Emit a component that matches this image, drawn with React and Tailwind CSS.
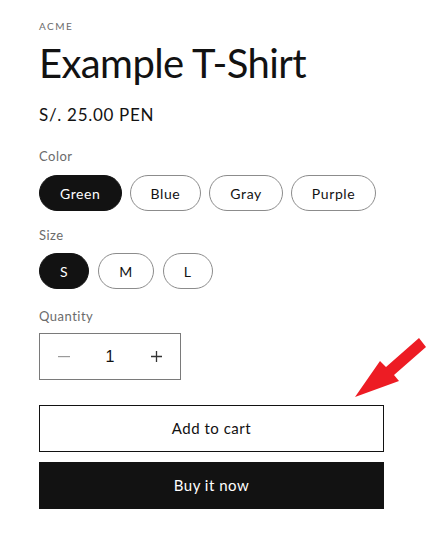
import { useState } from 'react';

const COLORS = ['Green', 'Blue', 'Gray', 'Purple'];
const SIZES = ['S', 'M', 'L'];

const Pill = ({ label, active, onClick }) => (
    <button
        onClick={onClick}
        className={`h-[36px] rounded-full px-[20px] text-[14px] tracking-[0.6px] border ${
            active
                ? 'bg-[#121212] border-[#121212] text-white'
                : 'bg-white border-[#8c8c8c] text-[#121212]'
        }`}
    >
        {label}
    </button>
);

const App = () => {
    const [color, setColor] = useState('Green');
    const [size, setSize] = useState('S');
    const [qty, setQty] = useState(1);

    return (
        <div className="relative w-[426px] h-[542px] overflow-hidden bg-white text-[#121212]" style={{ fontFamily: 'Lato, "Open Sans", sans-serif' }}>
            <div className="pl-[39px] pr-[42px] pt-[19px]">
                <p className="text-[10px] leading-[14px] tracking-[1.5px] uppercase text-[#6b6b6b]">ACME</p>
                <h1 className="mt-[8px] text-[40px] leading-[44px] tracking-[-0.6px]">Example T-Shirt</h1>

                {/* Price */}
                <p className="mt-[18px] text-[17px] leading-[24px] tracking-[0.7px]">S/. 25.00 PEN</p>

                {/* Color */}
                <p className="mt-[20px] text-[13px] leading-[18px] tracking-[0.5px] text-[#6b6b6b]">Color</p>
                <div className="mt-[10px] flex gap-[8px]">
                    {COLORS.map(c => (
                        <Pill key={c} label={c} active={color === c} onClick={() => setColor(c)} />
                    ))}
                </div>

                {/* Size */}
                <p className="mt-[15px] text-[13px] leading-[18px] tracking-[0.5px] text-[#6b6b6b]">Size</p>
                <div className="mt-[9px] flex gap-[9px]">
                    {SIZES.map(s => (
                        <Pill key={s} label={s} active={size === s} onClick={() => setSize(s)} />
                    ))}
                </div>

                {/* Quantity */}
                <p className="mt-[18px] text-[13px] leading-[18px] tracking-[0.5px] text-[#6b6b6b]">Quantity</p>
                <div className="mt-[8px] flex items-center w-[142px] h-[47px] border border-[#7a7a7a]">
                    <button onClick={() => setQty(q => Math.max(1, q - 1))} className="w-[47px] h-full flex items-center justify-center text-[#9a9a9a]">
                        <svg width="12" height="2" viewBox="0 0 12 2"><rect width="12" height="1.2" fill="currentColor" /></svg>
                    </button>
                    <span className="flex-1 text-center text-[16px]" style={{ fontFamily: '"Liberation Sans", Arial, sans-serif' }}>{qty}</span>
                    <button onClick={() => setQty(q => q + 1)} className="w-[47px] h-full flex items-center justify-center text-[#333]">
                        <svg width="11" height="11" viewBox="0 0 11 11"><path d="M5.5 0v11M0 5.5h11" stroke="currentColor" strokeWidth="1.3" /></svg>
                    </button>
                </div>

                {/* Buttons */}
                <button className="mt-[25px] w-[345px] h-[47px] border-[1.5px] border-[#121212] text-[15px] tracking-[0.5px]">
                    Add to cart
                </button>
                <button className="mt-[10px] w-[345px] h-[47px] bg-[#121212] text-white text-[15px] tracking-[0.5px]">
                    Buy it now
                </button>
            </div>

            {/* Red annotation arrow */}
            <svg className="absolute left-[350px] top-[334px]" width="76" height="68" viewBox="350 334 76 68">
                <polygon points="419,338 426,347 394,375 399,381 355,397 380,361 386,367" fill="#ed1c24" />
            </svg>
        </div>
    );
};

export default App;
